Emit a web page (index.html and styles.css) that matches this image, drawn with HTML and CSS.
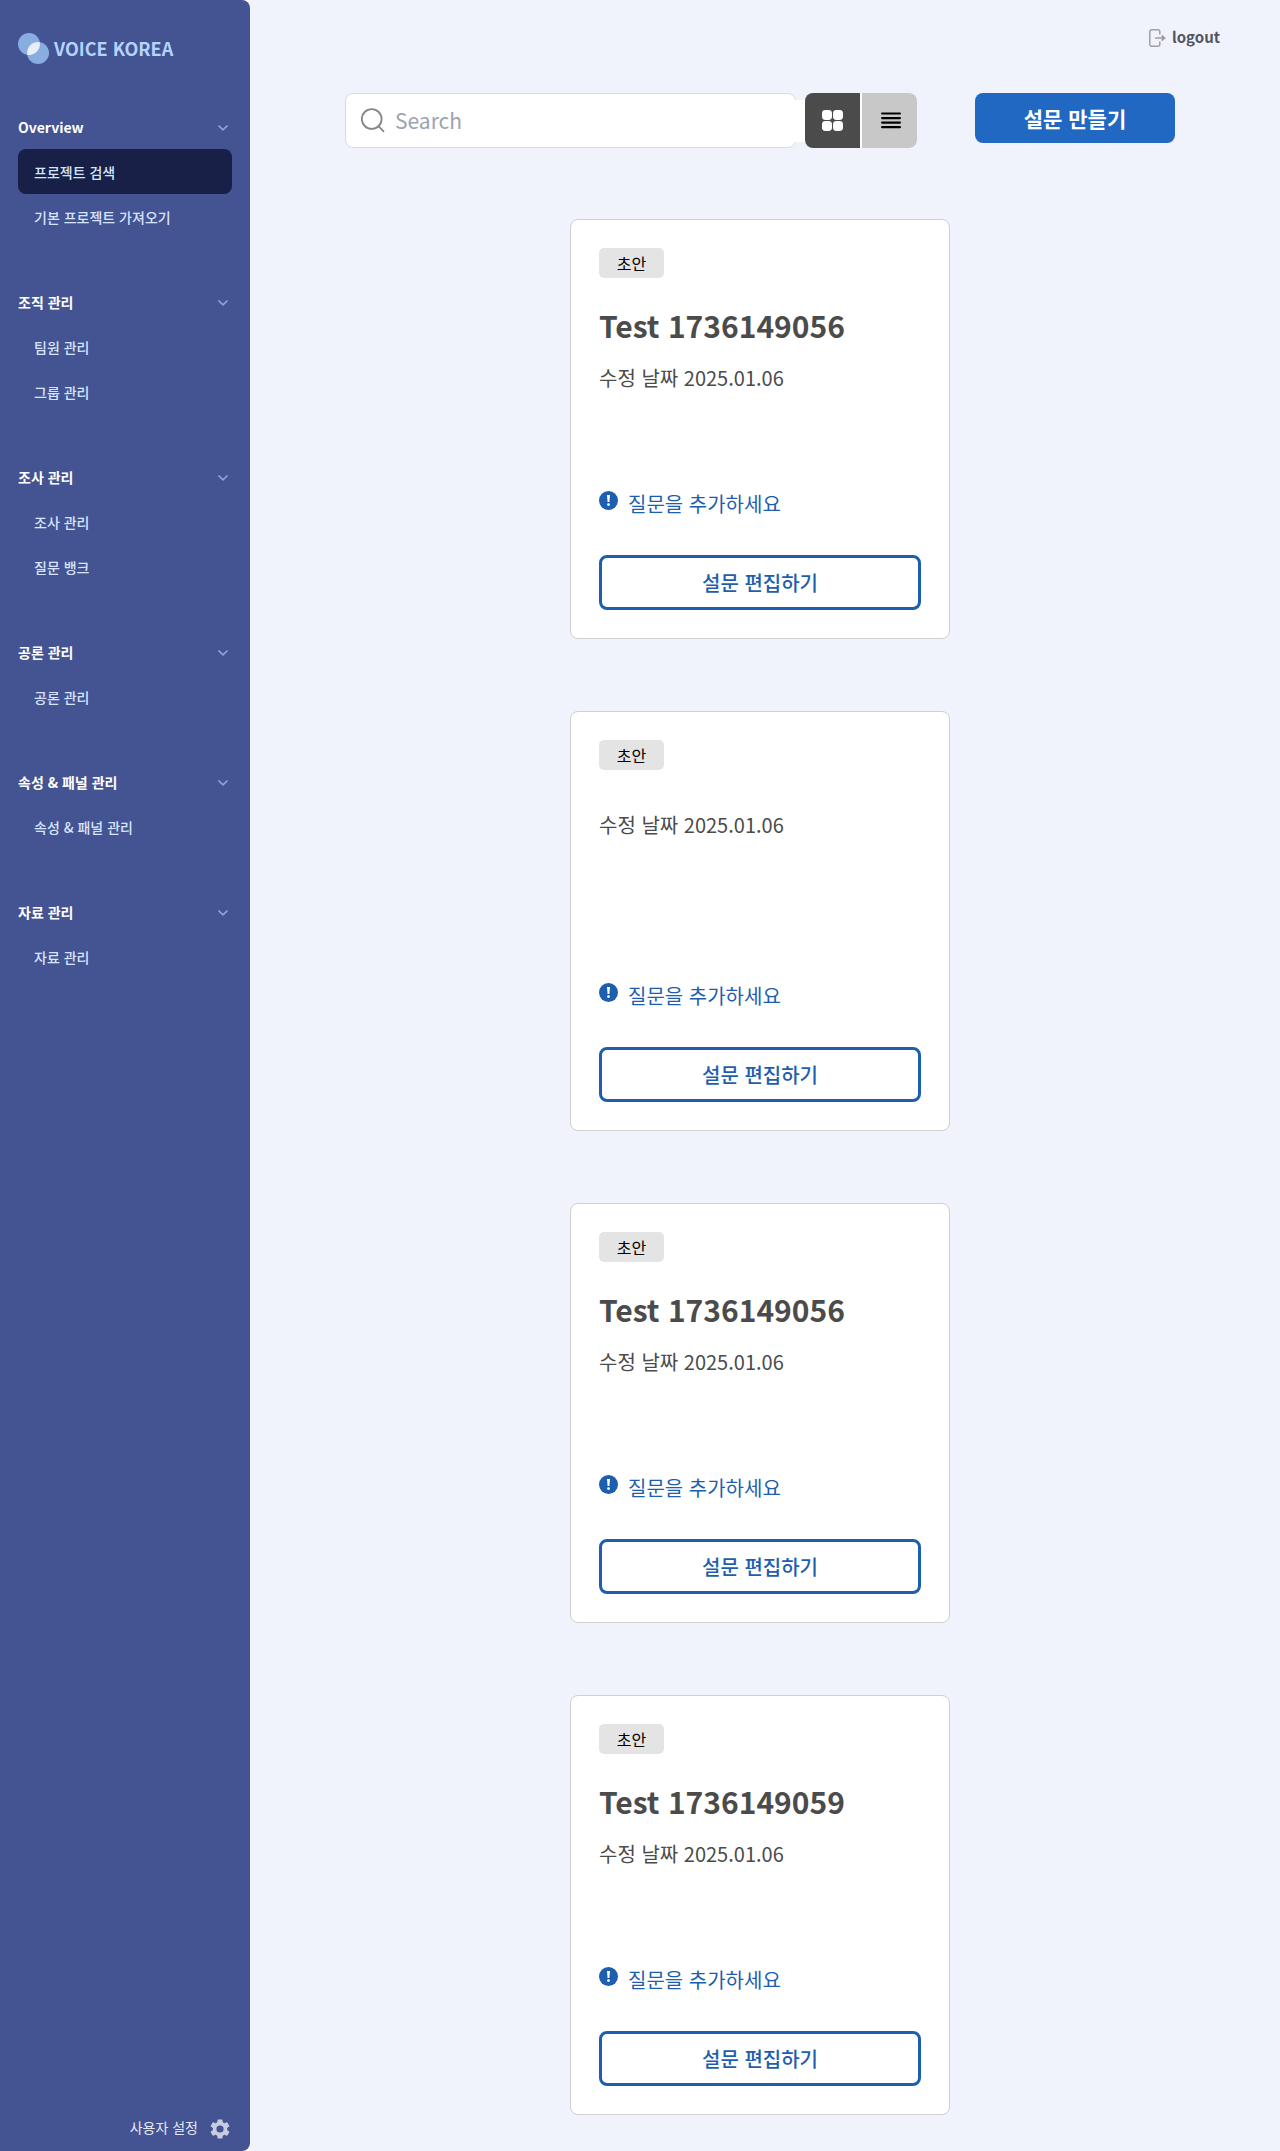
FILE: index.html
```html
<!DOCTYPE html>
<html lang="ko">
<head>
<meta charset="utf-8">
<title>VOICE KOREA</title>
<link rel="stylesheet" href="styles.css">
</head>
<body>
<svg class="defs" width="0" height="0" aria-hidden="true">
  <symbol id="chevron" viewBox="0 0 10 6"><path d="M.9.9 5 4.9 9.100 .9" fill="none" stroke="currentColor" stroke-width="1.5" stroke-linecap="round" stroke-linejoin="round"/></symbol>
  <symbol id="alert" viewBox="0 0 19 19"><circle cx="9.500" cy="9.500" r="9.500" fill="#1e5eaf"/><path d="M8 4h3l-.6 7H8.600z" fill="#fff"/><circle cx="9.500" cy="13.600" r="1.400" fill="#fff"/></symbol>
</svg>
<div class="page">
  <div class="rail">
    <aside class="sidebar">
      <div class="brand">
        <svg width="31" height="31" viewBox="0 0 31 31">
          <circle cx="11" cy="11" r="11" fill="#87ade1"/><circle cx="20" cy="20" r="11" fill="#87ade1"/>
          <path d="M21.800 9.150A11 11 0 0 1 9.150 21.800 11 11 0 0 1 21.800 9.150z" fill="#ebeef7"/>
        </svg>
        <span>VOICE KOREA</span>
      </div>
      <nav class="nav">
        <section><h2>Overview<svg class="chev"><use href="#chevron"/></svg></h2><a class="active">프로젝트 검색</a><a>기본 프로젝트 가져오기</a></section>
        <section><h2>조직 관리<svg class="chev"><use href="#chevron"/></svg></h2><a>팀원 관리</a><a>그룹 관리</a></section>
        <section><h2>조사 관리<svg class="chev"><use href="#chevron"/></svg></h2><a>조사 관리</a><a>질문 뱅크</a></section>
        <section><h2>공론 관리<svg class="chev"><use href="#chevron"/></svg></h2><a>공론 관리</a></section>
        <section><h2>속성 &amp; 패널 관리<svg class="chev"><use href="#chevron"/></svg></h2><a>속성 &amp; 패널 관리</a></section>
        <section><h2>자료 관리<svg class="chev"><use href="#chevron"/></svg></h2><a>자료 관리</a></section>
      </nav>
      <div class="settings">
        <span>사용자 설정</span>
        <svg width="24" height="24" viewBox="0 0 24 24"><path fill="#c7cce0" d="M19.140 12.940c.04-.3.06-.61.06-.94s-.02-.64-.07-.94l2.030-1.580a.49.49 0 0 0 .12-.61l-1.920-3.320a.49.49 0 0 0-.59-.22l-2.390.96c-.5-.38-1.030-.7-1.620-.94l-.36-2.540a.48.48 0 0 0-.48-.41h-3.840a.47.47 0 0 0-.47.41l-.36 2.540c-.59.24-1.130.57-1.620.94l-2.390-.96a.48.48 0 0 0-.59.22L2.740 8.870a.47.47 0 0 0 .12.61l2.030 1.580c-.05.3-.09.63-.09.94s.02.64.07.94l-2.030 1.580a.49.49 0 0 0-.12.61l1.920 3.320c.12.22.37.29.59.22l2.390-.96c.5.38 1.030.7 1.620.94l.36 2.540c.05.24.24.41.48.41h3.840c.24 0 .44-.17.47-.41l.36-2.540c.59-.24 1.130-.56 1.620-.94l2.390.96c.22.08.47 0 .59-.22l1.920-3.320a.47.47 0 0 0-.12-.61zM12 15.600a3.600 3.600 0 1 1 0-7.200 3.600 3.600 0 0 1 0 7.200z"/></svg>
      </div>
    </aside>
  </div>
  <main class="main">
    <header class="top">
      <svg width="17" height="18" viewBox="0 0 17 18" fill="none" stroke="#a09fa1" stroke-width="1.500" stroke-linecap="round" stroke-linejoin="round"><path d="M10.800 5V2.800a2 2 0 0 0-2-2h-6a2 2 0 0 0-2 2v12.400a2 2 0 0 0 2 2h6a2 2 0 0 0 2-2V13"/><path d="M6.500 9H15.500"/><path d="M13.300 6.800 15.800 9l-2.500 2.200z" fill="#a09fa1"/></svg>
      <span>logout</span>
    </header>
    <div class="toolbar">
      <div class="search">
        <svg width="24" height="25" viewBox="0 0 24 25" fill="none" stroke="#868686" stroke-width="1.800"><circle cx="10.700" cy="11" r="9.900"/><path d="m17.500 18.200 5.500 5.600"/></svg>
        <span>Search</span>
      </div>
      <div class="bridge"></div>
      <div class="views">
        <div class="view grid"><svg width="21" height="21" viewBox="0 0 21 21" fill="#fff"><rect width="10" height="10" rx="3.400"/><rect x="11" width="10" height="10" rx="3.400"/><rect y="11" width="10" height="10" rx="3.400"/><rect x="11" y="11" width="10" height="10" rx="3.400"/></svg></div>
        <div class="view list"><svg width="20" height="17" viewBox="0 0 20 17" stroke="#000" stroke-width="2.200" stroke-linecap="round"><path d="M1.100 1.500h17.800M1.100 6.100h17.800M1.100 10.600h17.800M1.100 15.200h17.800"/></svg></div>
      </div>
      <div class="create">설문 만들기</div>
    </div>
    <div class="cards">
      <article class="card"><span class="badge">초안</span><h3>Test 1736149056</h3><p class="date">수정 날짜 2025.01.06</p><p class="note"><svg><use href="#alert"/></svg>질문을 추가하세요</p><div class="edit">설문 편집하기</div></article>
      <article class="card"><span class="badge">초안</span><h3></h3><p class="date">수정 날짜 2025.01.06</p><p class="note"><svg><use href="#alert"/></svg>질문을 추가하세요</p><div class="edit">설문 편집하기</div></article>
      <article class="card"><span class="badge">초안</span><h3>Test 1736149056</h3><p class="date">수정 날짜 2025.01.06</p><p class="note"><svg><use href="#alert"/></svg>질문을 추가하세요</p><div class="edit">설문 편집하기</div></article>
      <article class="card"><span class="badge">초안</span><h3>Test 1736149059</h3><p class="date">수정 날짜 2025.01.06</p><p class="note"><svg><use href="#alert"/></svg>질문을 추가하세요</p><div class="edit">설문 편집하기</div></article>
    </div>
  </main>
</div>
</body>
</html>
```
FILE: styles.css
```css
* { box-sizing: border-box; }
body, h2, h3, p { margin: 0; }
body { font-family: "Noto Sans CJK KR", sans-serif; background: #fff; }
svg { flex: none; display: block; }
.defs { position: absolute; }
.page { display: flex; height: 2151px; }
.rail { width: 250px; flex: none; }
.sidebar {
  height: 100%;
  padding: 33px 18px 12px;
  background: #445392;
  border-radius: 0 8px 8px 0;
  display: flex;
  flex-direction: column;
}
.brand { display: flex; align-items: center; gap: 5px; height: 31px; color: #b4d3fe; font-size: 18px; font-weight: 700; }
.brand span { padding-bottom: 1px; }
.nav { margin-top: 40px; display: flex; flex-direction: column; gap: 40px; }
.nav h2 { display: flex; align-items: center; justify-content: space-between; height: 45px; padding-right: 4px; color: #fff; font-size: 14px; font-weight: 700; }
.nav a { display: flex; align-items: center; height: 45px; padding-left: 16px; border-radius: 8px; color: #d5e5fe; font-size: 14px; font-weight: 500; }
.nav .active { background: #182047; }
.chev { width: 10px; height: 6px; margin-top: 2px; color: #8f9fe0; }
.settings { margin-top: auto; display: flex; align-items: center; justify-content: flex-end; gap: 10px; height: 20px; color: #e4e8f5; font-size: 14px; }
.settings span { padding-bottom: 5px; }
.main { flex: 1; background: #f0f3fc; }
.top { display: flex; align-items: center; justify-content: flex-end; gap: 6px; height: 75px; padding: 0 60px 0; color: #555462; font-size: 15px; font-weight: 700; }
.top span { padding-bottom: 2px; }
.toolbar { display: flex; align-items: center; height: 55px; margin: 18px 105px 0 95px; }
.search { display: flex; align-items: center; gap: 10px; width: 451px; height: 55px; padding-left: 15px; background: #fff; border: 1px solid #dcdcdc; border-radius: 8px; color: #9ca3af; font-size: 21px; }
.search span { padding-bottom: 2px; }
.bridge { width: 12px; height: 42px; margin-left: -3px; background: #fff; }
.views { display: flex; gap: 2px; height: 55px; background: #fff; border-radius: 8px; }
.view { width: 55px; display: flex; align-items: center; justify-content: center; }
.grid { background: #4b4b4b; border-radius: 8px 0 0 8px; }
.list { padding-left: 2px; background: #c8c8c8; border-radius: 0 8px 8px 0; }
.create { width: 200px; height: 50px; margin-left: auto; align-self: flex-start; background: #2168c3; border-radius: 8px; color: #fff; font-size: 21px; font-weight: 700; line-height: 50px; text-align: center; }
.cards { display: flex; flex-direction: column; align-items: center; gap: 72px; padding-top: 71px; }
.card { display: flex; flex-direction: column; width: 380px; height: 420px; padding: 28px; background: #fff; border: 1px solid #d0d0d0; border-radius: 8px; margin-right: 10px; }
.badge { width: 65px; height: 30px; background: #e4e4e4; border-radius: 5px; color: #000; font-size: 16px; line-height: 30px; text-align: center; }
.card h3 { margin-top: 24px; height: 47px; color: #4b4b4b; font-size: 30px; font-weight: 700; line-height: 47px; }
.card h3:empty { height: 2px; }
.date { height: 30px; margin-top: 14px; color: #4b4b4b; font-size: 20px; line-height: 30px; }
.note { display: flex; gap: 10px; height: 30px; margin-top: auto; color: #1e5eaf; font-size: 20px; line-height: 30px; }
.note svg { width: 19px; height: 19px; margin-top: 2px; }
.edit { height: 55px; margin-top: 36px; border: 3px solid #1e5eaf; border-radius: 8px; color: #1e5eaf; font-size: 20px; font-weight: 500; line-height: 49px; text-align: center; }
```
